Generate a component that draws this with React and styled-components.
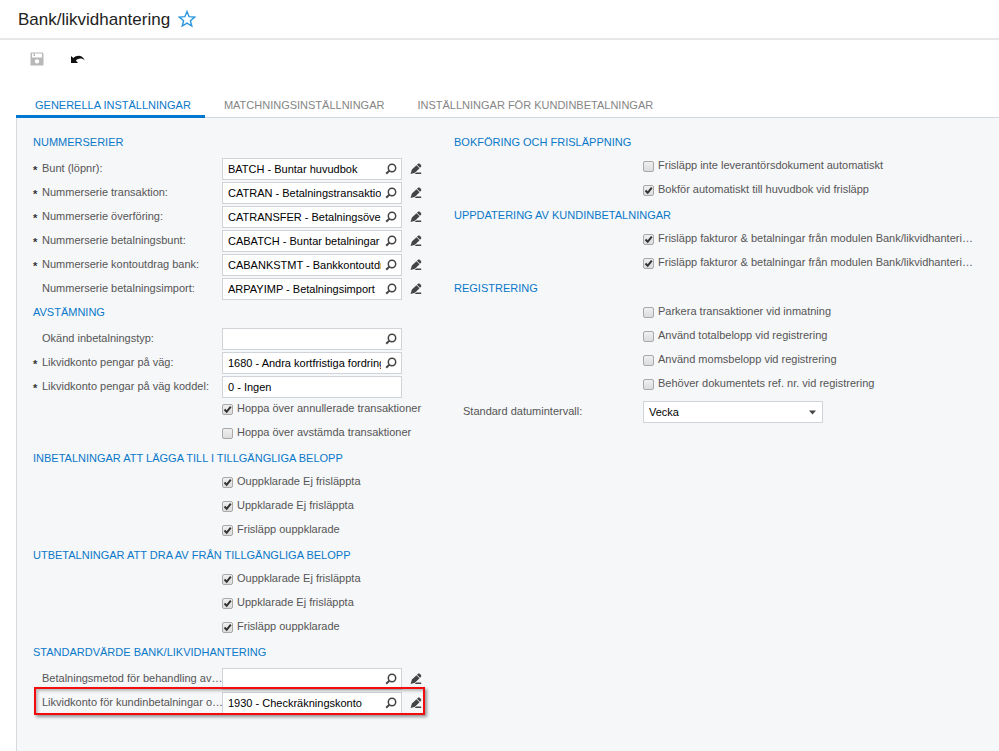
import React from "react"
import styled, { createGlobalStyle } from "styled-components"

const GlobalStyle = createGlobalStyle`
  body {
    margin: 0;
    background: #fff;
    font-family: "Liberation Sans", Arial, sans-serif;
    font-size: 11px;
    color: #555;
  }
  * {
    box-sizing: border-box;
  }
`

const Page = styled.div`
  display: flex;
  flex-direction: column;
  min-height: 100vh;
`

const Header = styled.header`
  display: flex;
  align-items: center;
  gap: 8px;
  height: 40px;
  padding-left: 18px;
  border-bottom: 2px solid #e6e7e9;
`

const PageTitle = styled.h1`
  margin: 0;
  padding-top: 2px;
  font-size: 17px;
  line-height: 20px;
  font-weight: normal;
  color: #222;
`

const IconButton = styled.button`
  display: flex;
  flex: none;
  padding: 0;
  border: 0;
  background: none;
`

const Toolbar = styled.div`
  display: flex;
  align-items: center;
  gap: 26px;
  height: 38px;
  padding-left: 30px;
`

const TabList = styled.nav`
  display: flex;
  margin: 14px 0 0 16px;
  box-shadow: inset 0 -1px 0 #d3d6da;
`

const Tab = styled.button`
  height: 26px;
  padding: 2px 14px 0 19px;
  border: 0;
  border-bottom: 3px solid ${props => (props.$active ? "#0078d0" : "transparent")};
  background: none;
  color: ${props => (props.$active ? "#0a78c8" : "#858585")};
  font-family: inherit;
  font-size: 11px;
`

const Panel = styled.main`
  display: grid;
  grid-template-columns: 421px minmax(0, 1fr);
  flex: 1;
  margin-left: 16px;
  padding: 13px 16px 20px;
  border-left: 1px solid #d6dade;
  background: #f5f7f9;
`

const SectionWrapper = styled.section`
  position: relative;
`

const SectionTitle = styled.h2`
  margin: ${props => (props.$checks ? "0 0 3px" : "0 0 4px")};
  font-size: 11px;
  line-height: 22px;
  font-weight: normal;
  color: #0a78c8;
`

const Row = styled.div`
  display: grid;
  grid-template-columns: 9px 180px minmax(0, 1fr);
  align-items: center;
  height: ${props => (props.$tall ? "28px" : "24px")};
`

const Required = styled.span`
  padding-top: 2px;
  font-weight: bold;
  line-height: 12px;
  color: #333;
`

const Label = styled.label`
  white-space: nowrap;
  line-height: 14px;
  padding-bottom: 2px;
`

const Controls = styled.div`
  display: flex;
  align-items: center;
  gap: 8px;
`

const Field = styled.div`
  display: flex;
  align-items: center;
  width: 180px;
  height: 22px;
  padding-right: 4px;
  border: 1px solid #d0d3d8;
  background: #fff;
`

const Input = styled.input`
  flex: 1;
  min-width: 0;
  height: 20px;
  margin-right: 4px;
  padding: 0 0 0 5px;
  border: 0;
  outline: 0;
  background: none;
  color: #000;
  font-family: inherit;
  font-size: 11px;
`

const SelectField = styled(Field)`
  display: grid;
  padding: 0;
  svg {
    grid-area: 1 / 1;
    justify-self: end;
    margin-right: 5px;
    pointer-events: none;
  }
`

const Select = styled.select`
  grid-area: 1 / 1;
  width: 100%;
  height: 20px;
  padding: 0 5px;
  border: 0;
  appearance: none;
  background: none;
  color: #000;
  font-family: inherit;
  font-size: 11px;
`

const CheckLabel = styled.label`
  display: flex;
  align-items: center;
  height: 24px;
  gap: 4px;
  padding: 0 0 4px 189px;
  white-space: nowrap;
`

const CheckText = styled.span`
  padding-bottom: 2px;
  line-height: 14px;
`

const Checkbox = styled.input`
  appearance: none;
  flex: none;
  width: 11px;
  height: 11px;
  margin: 0;
  border: 1px solid #a9a9a9;
  border-radius: 2px;
  background: linear-gradient(#f0f0f0, #dcdcdc);
`

const CheckBoxWrapper = styled.span`
  display: grid;
  flex: none;
  > * {
    grid-area: 1 / 1;
  }
  svg {
    pointer-events: none;
  }
`

const Highlight = styled.div`
  position: absolute;
  left: 1px;
  bottom: 0;
  width: 391px;
  height: 28px;
  border: 2px solid #f40b0b;
  box-shadow: 2px 2px 3px rgba(0, 0, 0, 0.4), inset 2px 2px 3px rgba(0, 0, 0, 0.25);
  pointer-events: none;
`

const StarIcon = () => (
  <svg width="18" height="18" viewBox="0 0 18 18" fill="none" stroke="#2a97e0" strokeWidth="1.4">
    <path d="M9 1.5l2.1 5.2 5.6.4-4.3 3.6 1.4 5.4L9 13.1l-4.800 3 1.400-5.400-4.300-3.600 5.600-.4z" />
  </svg>
)

const SaveIcon = () => (
  <svg width="14" height="14" viewBox="0 0 14 14">
    <path
      fill="#b8b8b8"
      fillRule="evenodd"
      d="M.5.5h12l1 1v12H.5zM2 1.500v4h10v-4zM7 7.200a2.200 2.200 0 1 0 .01 0z"
    />
    <path fill="#b8b8b8" d="M3.500 1.500H5v2.500H3.500z" />
  </svg>
)

const UndoIcon = () => (
  <svg width="16" height="12" viewBox="0 0 16 12">
    <path fill="#111" d="M1 3v7h7L5.800 7.600C8.200 5 12 4.800 14.800 7.500 13 2.500 7.500 1 3.300 5.100z" />
  </svg>
)

const SearchIcon = () => (
  <svg width="12" height="12" viewBox="0 0 12 12" fill="none" stroke="#444">
    <circle cx="7" cy="5" r="3.7" strokeWidth="1.5" />
    <path d="M4.4 7.600L1.200 10.800" strokeWidth="2" />
  </svg>
)

const PencilIcon = () => (
  <svg width="12" height="12" viewBox="0 0 12 12" fill="#444">
    <path d="M8.300.5h1.200l1.700 1.800v1.200L10 4.700 7 1.700zM6.500 2.200l3 3L5 9.700.6 10.900 1.900 6.600z" />
    <path d="M6.300 9.500h4.900v1.400H4.600z" />
  </svg>
)

const CheckIcon = () => (
  <svg width="11" height="11" viewBox="0 0 11 11" fill="none" stroke="#333" strokeWidth="2">
    <path d="M2.500 5.500l2.200 2.300L8.800 2.600" />
  </svg>
)

const CaretIcon = () => (
  <svg width="9" height="5" viewBox="0 0 9 5">
    <path fill="#444" d="M1 .5h7L4.500 4.500z" />
  </svg>
)

const numberSeries = [
  { id: "bunt", label: "Bunt (löpnr):", value: "BATCH - Buntar huvudbok", required: true, search: true, edit: true },
  { id: "transaktion", label: "Nummerserie transaktion:", value: "CATRAN - Betalningstransaktioner", required: true, search: true, edit: true },
  { id: "overforing", label: "Nummerserie överföring:", value: "CATRANSFER - Betalningsöverföring", required: true, search: true, edit: true },
  { id: "betalningsbunt", label: "Nummerserie betalningsbunt:", value: "CABATCH - Buntar betalningar", required: true, search: true, edit: true },
  { id: "kontoutdrag", label: "Nummerserie kontoutdrag bank:", value: "CABANKSTMT - Bankkontoutdrag", required: true, search: true, edit: true },
  { id: "import", label: "Nummerserie betalningsimport:", value: "ARPAYIMP - Betalningsimport", search: true, edit: true },
]

const reconciliation = [
  { id: "okand", label: "Okänd inbetalningstyp:", value: "", search: true },
  { id: "likvid", label: "Likvidkonto pengar på väg:", value: "1680 - Andra kortfristiga fordringar", required: true, search: true },
  { id: "koddel", label: "Likvidkonto pengar på väg koddel:", value: "0 - Ingen", required: true },
]

const defaults = [
  { id: "metod", label: "Betalningsmetod för behandling av…", value: "", search: true, edit: true },
  { id: "kundkonto", label: "Likvidkonto för kundinbetalningar o…", value: "1930 - Checkräkningskonto", search: true, edit: true },
]

const balanceChecks = [
  { label: "Ouppklarade Ej frisläppta", checked: true },
  { label: "Uppklarade Ej frisläppta", checked: true },
  { label: "Frisläpp ouppklarade", checked: true },
]

const FieldRow = ({ field }) => (
  <Row>
    <Required>{field.required ? "*" : ""}</Required>
    <Label htmlFor={field.id}>{field.label}</Label>
    <Controls>
      <Field>
        <Input id={field.id} defaultValue={field.value} />
        {field.search && <IconButton aria-label="Sök"><SearchIcon /></IconButton>}
      </Field>
      {field.edit && <IconButton aria-label="Redigera"><PencilIcon /></IconButton>}
    </Controls>
  </Row>
)

const CheckRow = ({ item }) => {
  const [checked, setChecked] = React.useState(!!item.checked)
  return (
    <CheckLabel>
      <CheckBoxWrapper>
        <Checkbox type="checkbox" checked={checked} onChange={e => setChecked(e.target.checked)} />
        {checked && <CheckIcon />}
      </CheckBoxWrapper>
      <CheckText>{item.label}</CheckText>
    </CheckLabel>
  )
}

const Section = ({ title, fields = [], checks = [], children }) => (
  <SectionWrapper>
    <SectionTitle $checks={!fields.length}>{title}</SectionTitle>
    {fields.map(field => <FieldRow key={field.id} field={field} />)}
    {checks.map((item, i) => <CheckRow key={i} item={item} />)}
    {children}
  </SectionWrapper>
)

class App extends React.Component {
  render() {
    return (
      <Page>
        <GlobalStyle />
        <Header>
          <PageTitle>Bank/likvidhantering</PageTitle>
          <IconButton aria-label="Favorit"><StarIcon /></IconButton>
        </Header>
        <Toolbar>
          <IconButton aria-label="Spara"><SaveIcon /></IconButton>
          <IconButton aria-label="Ångra"><UndoIcon /></IconButton>
        </Toolbar>
        <TabList>
          <Tab $active>GENERELLA INSTÄLLNINGAR</Tab>
          <Tab>MATCHNINGSINSTÄLLNINGAR</Tab>
          <Tab>INSTÄLLNINGAR FÖR KUNDINBETALNINGAR</Tab>
        </TabList>
        <Panel>
          <div>
            <Section title="NUMMERSERIER" fields={numberSeries} />
            <Section
              title="AVSTÄMNING"
              fields={reconciliation}
              checks={[
                { label: "Hoppa över annullerade transaktioner", checked: true },
                { label: "Hoppa över avstämda transaktioner" },
              ]}
            />
            <Section title="INBETALNINGAR ATT LÄGGA TILL I TILLGÄNGLIGA BELOPP" checks={balanceChecks} />
            <Section title="UTBETALNINGAR ATT DRA AV FRÅN TILLGÄNGLIGA BELOPP" checks={balanceChecks} />
            <Section title="STANDARDVÄRDE BANK/LIKVIDHANTERING" fields={defaults}>
              <Highlight />
            </Section>
          </div>
          <div>
            <Section
              title="BOKFÖRING OCH FRISLÄPPNING"
              checks={[
                { label: "Frisläpp inte leverantörsdokument automatiskt" },
                { label: "Bokför automatiskt till huvudbok vid frisläpp", checked: true },
              ]}
            />
            <Section
              title="UPPDATERING AV KUNDINBETALNINGAR"
              checks={[
                { label: "Frisläpp fakturor & betalningar från modulen Bank/likvidhanteri…", checked: true },
                { label: "Frisläpp fakturor & betalningar från modulen Bank/likvidhanteri…", checked: true },
              ]}
            />
            <Section
              title="REGISTRERING"
              checks={[
                { label: "Parkera transaktioner vid inmatning" },
                { label: "Använd totalbelopp vid registrering" },
                { label: "Använd momsbelopp vid registrering" },
                { label: "Behöver dokumentets ref. nr. vid registrering" },
              ]}
            >
              <Row $tall>
                <span />
                <Label htmlFor="intervall">Standard datumintervall:</Label>
                <SelectField>
                  <Select id="intervall"><option>Vecka</option></Select>
                  <CaretIcon />
                </SelectField>
              </Row>
            </Section>
          </div>
        </Panel>
      </Page>
    )
  }
}

export default App
